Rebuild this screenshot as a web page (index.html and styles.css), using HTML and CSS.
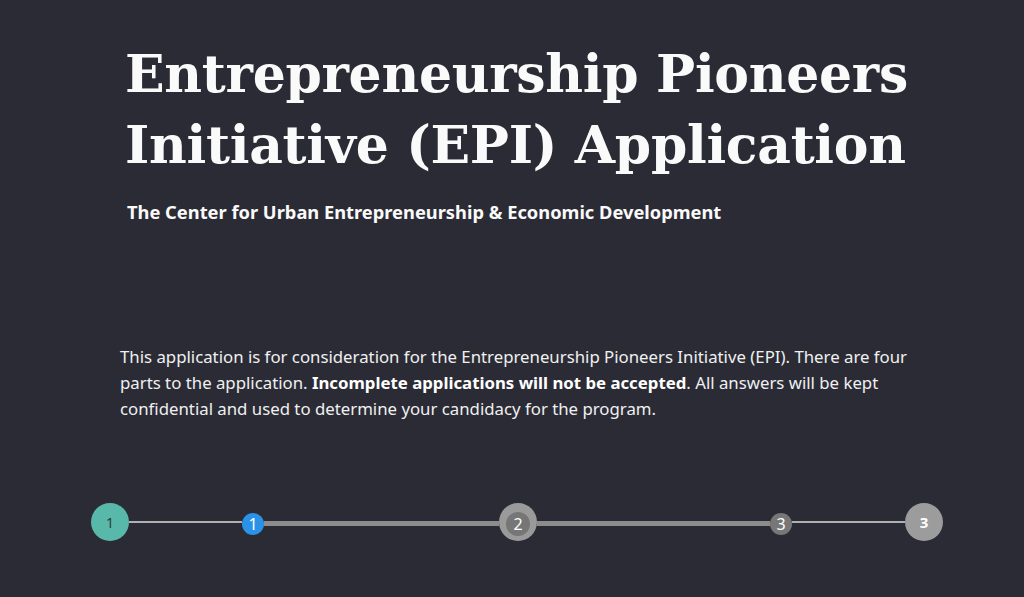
FILE: index.html
```html
<!DOCTYPE html>
<html>
<head>
<meta charset="utf-8">
<link rel="stylesheet" href="styles.css">
</head>
<body>
<main class="page">
  <header class="hero">
    <h1 class="title">Entrepreneurship Pioneers Initiative (EPI) Application</h1>
    <h2 class="subtitle">The Center for Urban Entrepreneurship &amp; Economic Development</h2>
  </header>
  <p class="intro">This application is for consideration for the Entrepreneurship Pioneers Initiative (EPI). There are four parts to the application. <strong>Incomplete applications will not be accepted</strong>. All answers will be kept confidential and used to determine your candidacy for the program.</p>
  <div class="stepper">
    <div class="dot big teal">1</div>
    <div class="line thin l1"></div>
    <div class="dot small blue">1</div>
    <div class="line bar b1"></div>
    <div class="dot big grey2"><span class="inner">2</span></div>
    <div class="line bar b2"></div>
    <div class="dot small grey3">3</div>
    <div class="line thin l2"></div>
    <div class="dot big grey4">3</div>
  </div>
</main>
</body>
</html>
```
FILE: styles.css
```css
html, body {
  margin: 0;
  padding: 0;
  background: #2b2b35;
}
body {
  width: 1024px;
  height: 597px;
  overflow: hidden;
  color: #fafafa;
  font-family: "Noto Sans", sans-serif;
}
.page {
  padding: 0 0 0 120px;
}
.hero {
  padding: 38px 0 0 5px;
}
.title {
  margin: 0;
  font-family: "DejaVu Serif", serif;
  font-weight: bold;
  font-size: 52px;
  line-height: 71px;
  letter-spacing: -0.3px;
  color: #fafafa;
  width: 860px;
}
.subtitle {
  margin: 20px 0 0 2px;
  font-family: "Noto Sans", sans-serif;
  font-weight: bold;
  font-size: 18.3px;
  line-height: 24px;
  color: #fafafa;
}
.intro {
  margin: 120px 0 0 0;
  width: 800px;
  font-family: "Noto Sans", sans-serif;
  font-size: 16.8px;
  line-height: 26px;
  color: #f0f0f0;
}
.intro strong {
  font-weight: bold;
  color: #ffffff;
}
.stepper {
  margin: 80px 0 0 -29px;
  display: flex;
  align-items: center;
  height: 40px;
}
.dot {
  flex: none;
  border-radius: 50%;
  display: flex;
  align-items: center;
  justify-content: center;
  font-family: "Noto Sans", sans-serif;
  position: relative;
  z-index: 1;
}
.big {
  width: 38px;
  height: 38px;
  font-size: 14px;
}
.small {
  width: 22px;
  height: 22px;
  font-size: 16px;
  color: #fff;
  margin-top: 4px;
}
.teal {
  background: #58b8a9;
  color: #2f3a3a;
}
.blue {
  background: #2a93e8;
}
.grey2 {
  background: #9a9a9a;
}
.grey2 .inner {
  width: 24px;
  height: 24px;
  border-radius: 50%;
  background: #767676;
  color: #fff;
  font-size: 16px;
  display: flex;
  align-items: center;
  justify-content: center;
  margin-top: 4px;
}
.grey3 {
  background: #777777;
}
.grey4 {
  background: #9c9c9c;
  color: #fff;
  font-weight: bold;
  font-size: 15px;
}
.line {
  flex: none;
}
.thin {
  height: 2px;
  background: #b0b0b0;
}
.bar {
  height: 5px;
  background: #8c8c8c;
  margin-top: 2px;
}
.l1 { width: 113px; }
.b1 { width: 235px; }
.b2 { width: 233px; }
.l2 { width: 113px; }
```
